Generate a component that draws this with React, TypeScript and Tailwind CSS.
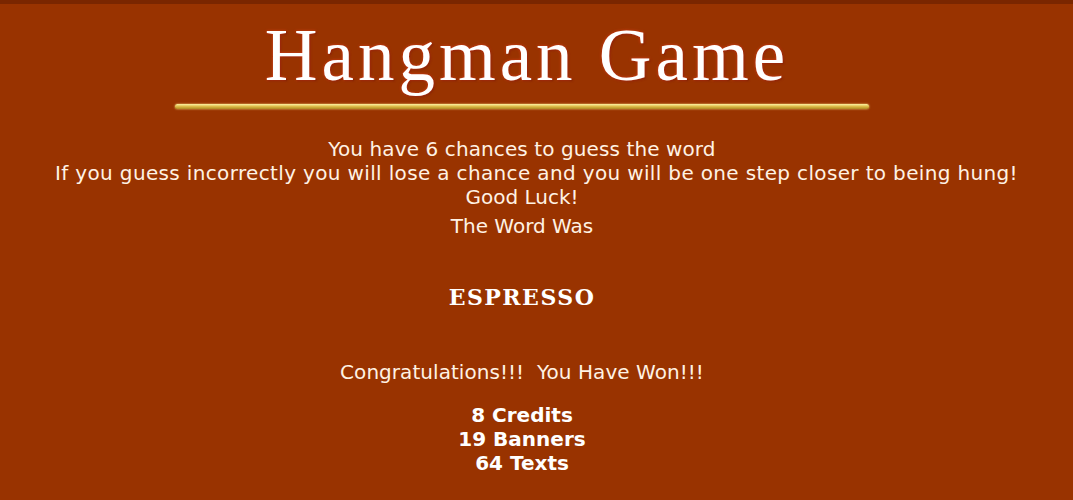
const sans = "font-['DejaVu_Sans',Verdana,sans-serif]";

export default function App() {
  return (
    <div className="flex min-h-[500px] w-full flex-col items-center border-t-4 border-[#7a2600] bg-[#993300] pr-[29px] text-center text-[#fff2e4]">
      <h1 className="ml-[10px] pt-[10px] font-['Liberation_Serif',serif] text-[73px] leading-[84px] tracking-[4px] text-white [text-shadow:0_0_3px_#e0401c,1px_1px_2px_#6a1800]">
        Hangman Game
      </h1>
      <div className="mt-[6px] h-[5px] w-[694px] rounded-full bg-gradient-to-b from-[#fff2a0] via-[#dcbc48] to-[#b08a22] shadow-[0_0_2px_#ffe680]" />
      <div className={`mt-[28px] flex flex-col items-center text-[20px] leading-[24px] ${sans}`}>
        <p className="tracking-[0.1px]">You have 6 chances to guess the word</p>
        <p className="-mr-[29px] tracking-[0.35px]">
          If you guess incorrectly you will lose a chance and you will be one step closer to being hung!
        </p>
        <p>Good Luck!</p>
        <p className="mt-[5px]">The Word Was</p>
      </div>
      <p className="mt-[45px] font-['DejaVu_Serif',serif] text-[22px] font-bold leading-[28px] tracking-[1.5px] text-white">
        ESPRESSO
      </p>
      <p className={`mt-[49px] text-[20px] leading-[24px] tracking-[0.05px] ${sans}`}>
        Congratulations!!!&nbsp; You Have Won!!!
      </p>
      <div className={`mt-[19px] text-[20px] font-bold leading-[24px] text-white ${sans}`}>
        <p>8 Credits</p>
        <p>19 Banners</p>
        <p>64 Texts</p>
      </div>
    </div>
  );
}
